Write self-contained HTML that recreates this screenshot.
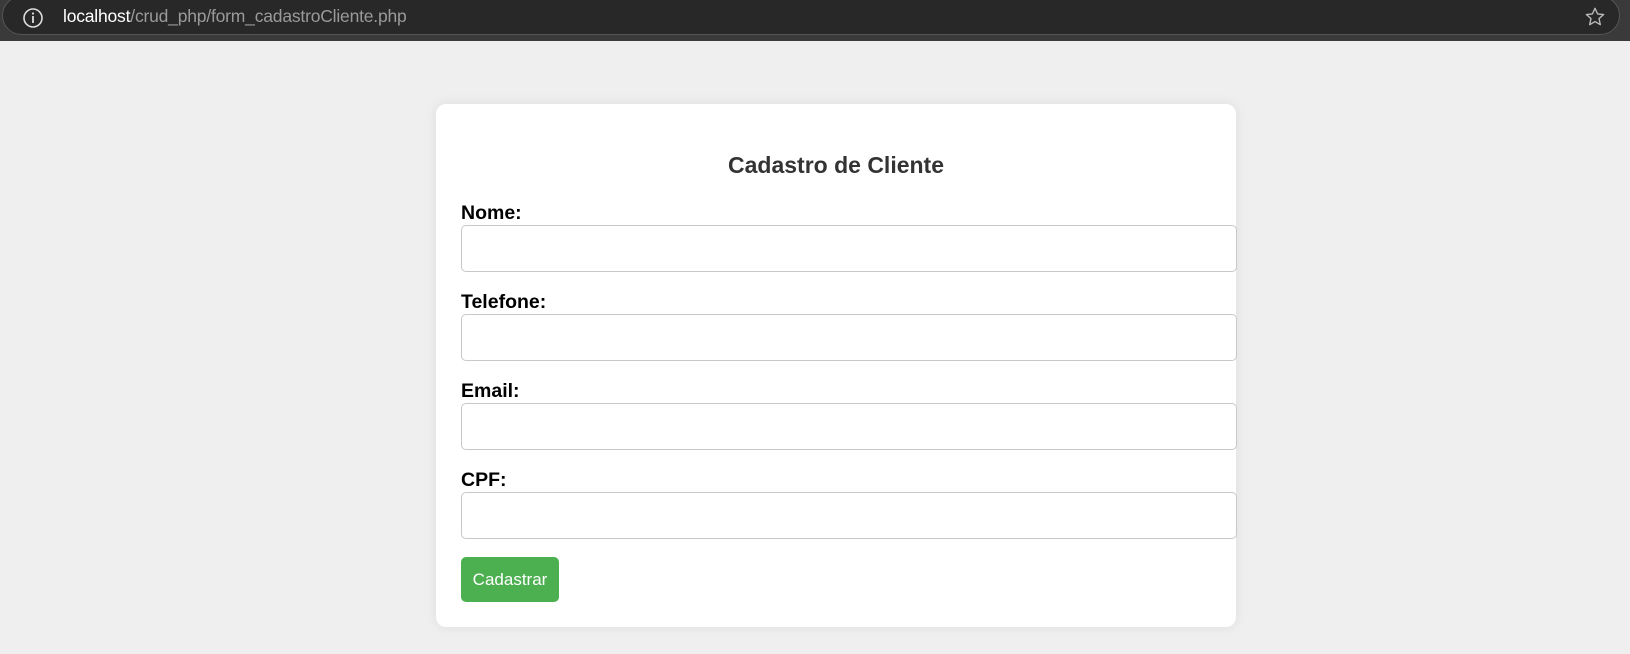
<!DOCTYPE html>
<html><head><style>
*{box-sizing:border-box;margin:0;padding:0}
body{width:1630px;height:654px;background:#efefef;font-family:"Liberation Sans",Arial,sans-serif;position:relative;overflow:hidden}
.bar{position:absolute;left:0;top:0;width:1630px;height:41px;background:#3a3a3a}
.pill{position:absolute;left:2px;top:-4px;width:1618px;height:39px;background:#282828;border:1px solid #555;border-radius:20px}
.url{position:absolute;left:63px;top:6px;font-size:17.5px;color:#9a9a9a;font-family:"Liberation Sans",sans-serif;letter-spacing:-0.2px}
.url b{color:#fff;font-weight:normal}
.card{position:absolute;left:436px;top:104px;width:800px;height:523px;background:#fff;border-radius:10px;box-shadow:0 0 12px rgba(0,0,0,.08)}
h2{position:absolute;left:0;width:800px;top:152px;text-align:center;font-size:23px;color:#333;font-weight:bold}
label{position:absolute;left:461px;font-size:19.5px;font-weight:bold;color:#000}
.in{position:absolute;left:461px;width:776px;height:47px;border:1px solid #c8c8c8;border-radius:5px;background:#fff}
.btn{position:absolute;left:461px;top:557px;width:98px;height:45px;background:#4caf50;border-radius:5px;color:#fff;font-size:17px;text-align:center;line-height:45px}
</style></head><body>
<div class="bar"><div class="pill"></div>
<svg style="position:absolute;left:22px;top:7px" width="22" height="22" viewBox="0 0 22 22"><circle cx="11" cy="11" r="9" fill="none" stroke="#ddd" stroke-width="1.6"/><rect x="10.1" y="9" width="1.8" height="7" fill="#ddd"/><circle cx="11" cy="6.5" r="1.1" fill="#ddd"/></svg>
<div class="url"><b>localhost</b>/crud_php/form_cadastroCliente.php</div>
<svg style="position:absolute;left:1584px;top:6px" width="22" height="22" viewBox="0 0 24 24"><path d="M12 2.5l2.8 6.1 6.6.7-5 4.5 1.4 6.6L12 17l-5.8 3.4 1.4-6.6-5-4.5 6.6-.7z" fill="none" stroke="#bbb" stroke-width="1.5" stroke-linejoin="round"/></svg>
</div>
<div class="card"></div>
<h2 style="left:436px">Cadastro de Cliente</h2>
<label style="top:202px">Nome:</label><div class="in" style="top:225px"></div>
<label style="top:291px">Telefone:</label><div class="in" style="top:314px"></div>
<label style="top:380px">Email:</label><div class="in" style="top:403px"></div>
<label style="top:469px">CPF:</label><div class="in" style="top:492px"></div>
<div class="btn">Cadastrar</div>
</body></html>
